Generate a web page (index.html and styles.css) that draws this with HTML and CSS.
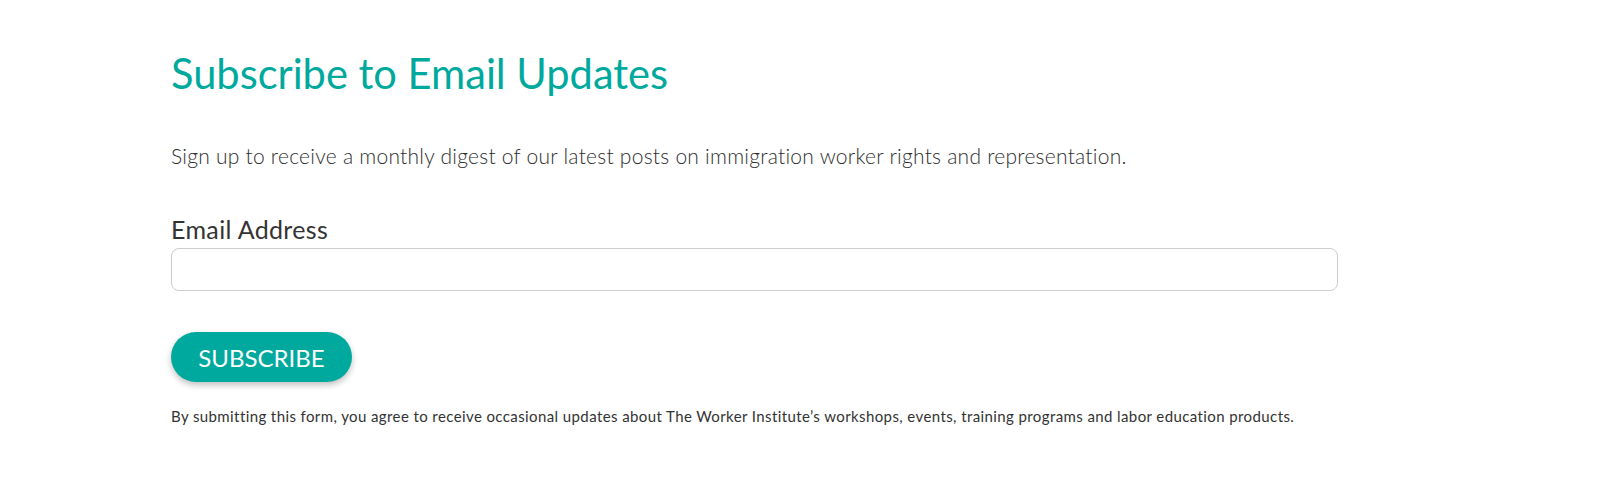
FILE: index.html
```html
<!DOCTYPE html>
<html lang="en">
<head>
<meta charset="utf-8">
<title>Subscribe to Email Updates</title>
<link rel="stylesheet" href="styles.css">
</head>
<body>
<main class="signup">
  <h1 class="signup-title">Subscribe to Email Updates</h1>
  <p class="signup-intro">Sign up to receive a monthly digest of our latest posts on immigration worker rights and representation.</p>
  <form class="signup-form" onsubmit="return false;">
    <label class="field-label" for="email">Email Address</label>
    <input class="field-input" id="email" type="email">
    <button class="subscribe-btn" type="submit">SUBSCRIBE</button>
  </form>
  <p class="signup-note">By submitting this form, you agree to receive occasional updates about The Worker Institute’s workshops, events, training programs and labor education products.</p>
</main>
</body>
</html>
```

FILE: styles.css
```css
html, body {
  margin: 0;
  padding: 0;
  background: #ffffff;
}
body {
  font-family: "Lato", "Open Sans", sans-serif;
  color: #333333;
}
.signup {
  width: 1167px;
  margin-left: 171px;
  padding-top: 49px;
  display: flex;
  flex-direction: column;
}
.signup-title {
  margin: 0;
  font-size: 41.6px;
  line-height: 48px;
  font-weight: 400;
  color: #00a99d;
}
.signup-intro {
  margin: 46px 0 0;
  font-size: 21px;
  line-height: 26px;
  font-weight: 300;
  letter-spacing: 0.25px;
  color: #2e2e2e;
}
.signup-form {
  display: flex;
  flex-direction: column;
  align-items: flex-start;
  margin-top: 45px;
}
.field-label {
  font-size: 25px;
  line-height: 30px;
  font-weight: 400;
  letter-spacing: 0.35px;
  color: #333333;
}
.field-input {
  box-sizing: border-box;
  width: 100%;
  height: 43px;
  margin-top: 4px;
  border: 1px solid #cccccc;
  border-radius: 8px;
  background: #fff;
  font: inherit;
  font-size: 18px;
  padding: 0 12px;
}
.subscribe-btn {
  margin-top: 41px;
  width: 181px;
  height: 50px;
  border: none;
  border-radius: 25px;
  background: #00a99d;
  color: #fff;
  font-family: "Lato", "Open Sans", sans-serif;
  font-size: 24px;
  font-weight: 400;
  box-shadow: 0 3px 6px rgba(0, 0, 0, 0.25);
  cursor: pointer;
  padding: 0;
}
.signup-note {
  margin: 24px 0 0;
  font-size: 15px;
  line-height: 20px;
  font-weight: 400;
  letter-spacing: 0.4px;
  color: #333333;
}
```
